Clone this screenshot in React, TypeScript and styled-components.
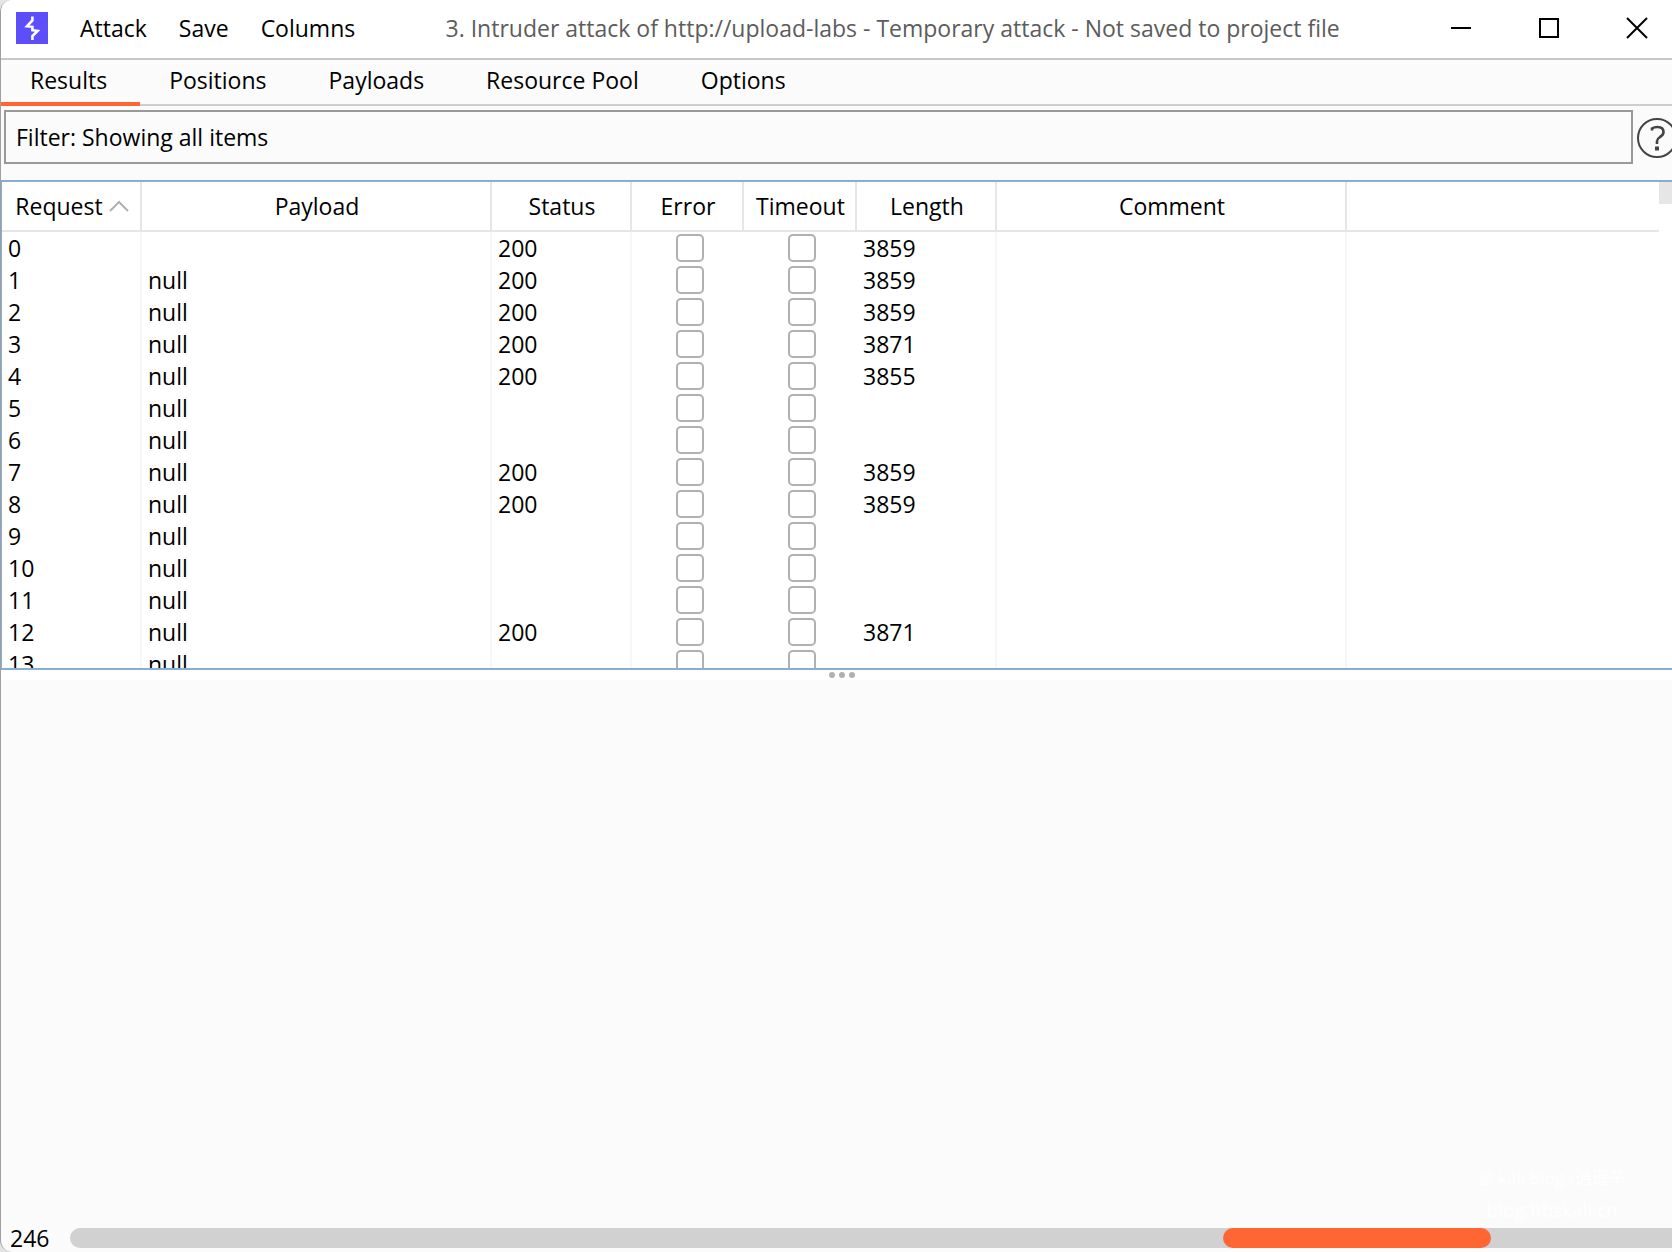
import React from "react";
import styled, { createGlobalStyle } from "styled-components";

const fontStack = `"Open Sans", "Noto Sans", "Noto Sans CJK SC", sans-serif`;

const GlobalStyle = createGlobalStyle`
  *, *::before, *::after { box-sizing: border-box; }
  html, body { margin: 0; background: #e4e4e4; overflow: hidden; }
  body, button, input { font-family: ${fontStack}; font-size: 23px; line-height: 32px; color: #000; }
  button { margin: 0; padding: 0; border: 0; background: none; white-space: nowrap; }
`;

const Window = styled.div`
  position: relative;
  display: flex;
  flex-direction: column;
  height: 100vh;
  overflow: hidden;
  background: #fbfbfb;
  border-left: 1px solid #a0a0a0;
  border-radius: 12px 0 0 12px;
`;

const TitleBar = styled.header`
  display: flex;
  align-items: center;
  height: 60px;
  padding: 0 20px 2px 15px;
  flex: none;
  background: #fff;
  border-bottom: 2px solid #c9c9c9;
`;

const Logo = styled.svg`
  width: 32px;
  height: 32px;
  flex: none;
`;

const Menu = styled.nav`
  display: flex;
  gap: 32px;
  margin-left: 32px;
`;

const MenuButton = styled.button``;

const Title = styled.h1`
  flex: 1;
  margin: 0;
  padding-right: 16px;
  font-size: 23px;
  font-weight: 400;
  line-height: 32px;
  color: #5c5c5c;
  text-align: center;
  white-space: nowrap;
`;

const WindowControls = styled.div`
  display: flex;
  gap: 58px;
`;

const ControlButton = styled.button`
  display: flex;
  align-items: center;
  justify-content: center;
  width: 30px;
  height: 32px;
`;

const TabBar = styled.div`
  display: flex;
  flex: none;
  height: 46px;
  border-bottom: 2px solid #cdcdcd;
`;

const Tab = styled.button<{ $active: boolean }>`
  height: 46px;
  padding: 0 33px 2px 29px;
  border-bottom: 4px solid ${(p) => (p.$active ? "#ff6633" : "transparent")};
`;

const FilterRow = styled.div`
  display: flex;
  flex: none;
  align-items: center;
  gap: 4px;
  padding: 4px 0 16px 3px;
`;

const FilterButton = styled.button`
  flex: 1;
  height: 54px;
  padding: 0 10px;
  border: 2px solid #999;
  text-align: left;
`;

const HelpButton = styled.button`
  display: flex;
  width: 35px;
  height: 42px;
  padding-top: 2px;
  overflow: hidden;
  flex: none;

  svg { flex: none; }
`;

const ResultsPane = styled.section`
  display: flex;
  flex: none;
  height: 490px;
  border: solid #88add3;
  border-width: 2px 0 2px 1px;
  background: #fff;
`;

const TableArea = styled.div`
  flex: 1;
  overflow: hidden;
`;

const ScrollTrack = styled.div`
  width: 13px;
  flex: none;
`;

const ScrollThumb = styled.div`
  height: 22px;
  background: #e6e6e6;
`;

const Table = styled.table`
  width: 100%;
  table-layout: fixed;
  border-collapse: separate;
  border-spacing: 0;
`;

const Col = styled.col<{ $width?: number }>`
  width: ${(p) => (p.$width ? `${p.$width}px` : "auto")};
`;

const HeadCell = styled.th<{ $last?: boolean }>`
  height: 50px;
  padding: 0 0 0 2px;
  border-bottom: 2px solid #e6e6e6;
  border-right: ${(p) => (p.$last ? "0" : "2px solid #e6e6e6")};
  font-weight: 400;
  white-space: nowrap;
`;

const SortButton = styled.button`
  display: inline-flex;
  align-items: center;
  gap: 6px;
`;

const Cell = styled.td<{ $line?: boolean }>`
  height: 32px;
  padding: 0 0 0 6px;
  border-right: ${(p) => (p.$line ? "2px solid #f7f7f7" : "0")};
`;

const CheckCell = styled(Cell)`
  padding-left: 3px;
  text-align: center;
  line-height: 0;
`;

const CheckBox = styled.input`
  appearance: none;
  width: 28px;
  height: 28px;
  margin: 0;
  border: 2px solid #b0b0b0;
  border-radius: 5px;
  background: #fff;
  vertical-align: middle;
`;

const Splitter = styled.div`
  display: flex;
  flex: none;
  justify-content: center;
  gap: 4px;
  height: 10px;
  padding: 2px 0 0 10px;
  background: #fff;
`;

const Dot = styled.span`
  width: 6px;
  height: 6px;
  border-radius: 50%;
  background: #b0b0b0;
`;

const DetailPane = styled.section`
  flex: 1;
`;

const StatusBar = styled.footer`
  display: flex;
  flex: none;
  align-items: center;
  height: 28px;
  padding-left: 9px;
`;

const Count = styled.span`
  width: 60px;
  line-height: 28px;
  flex: none;
`;

const ProgressTrack = styled.div`
  flex: 1;
  height: 20px;
  border-radius: 10px 0 0 10px;
  background: #d1d1d1;
`;

const ProgressChunk = styled.div`
  width: 16.7%;
  height: 20px;
  margin-left: 72%;
  border-radius: 10px;
  background: #ff6633;
`;

const Watermark = styled.div`
  position: absolute;
  right: 46px;
  bottom: 26px;
  color: #fff;
  font-size: 17px;
  line-height: 32px;
  text-align: center;
  pointer-events: none;
`;

const WatermarkSite = styled.div`
  font-size: 19px;
`;

const tabs = ["Results", "Positions", "Payloads", "Resource Pool", "Options"];

const columns: { name: string; width: number }[] = [
  { name: "Request", width: 140 },
  { name: "Payload", width: 350 },
  { name: "Status", width: 140 },
  { name: "Error", width: 112 },
  { name: "Timeout", width: 113 },
  { name: "Length", width: 140 },
  { name: "Comment", width: 350 },
];

const responses: Record<number, string> = {
  0: "3859",
  1: "3859",
  2: "3859",
  3: "3871",
  4: "3855",
  7: "3859",
  8: "3859",
  12: "3871",
};

const rows = Array.from({ length: 14 }, (_, id) => ({
  id,
  payload: id === 0 ? "" : "null",
  status: responses[id] ? "200" : "",
  length: responses[id] ?? "",
}));

export default function App() {
  return (
    <>
      <GlobalStyle />
      <Window>
        <TitleBar>
          <Logo viewBox="0 0 32 32" aria-hidden="true">
            <rect width="32" height="32" fill="#5c4ffb" />
            <path
              d="M16.4 4.5V8.5L11 14.2L16.4 14.8V18.2L21.6 19L16.4 24V28"
              fill="none"
              stroke="#fff"
              strokeWidth="2.6"
            />
          </Logo>
          <Menu aria-label="Main">
            <MenuButton>Attack</MenuButton>
            <MenuButton>Save</MenuButton>
            <MenuButton>Columns</MenuButton>
          </Menu>
          <Title>
            3. Intruder attack of http://upload-labs - Temporary attack - Not saved to project file
          </Title>
          <WindowControls>
            <ControlButton aria-label="Minimize">
              <svg width="20" height="20" viewBox="0 0 20 20">
                <path d="M0 10H20" stroke="#000" strokeWidth="2" />
              </svg>
            </ControlButton>
            <ControlButton aria-label="Maximize">
              <svg width="20" height="20" viewBox="0 0 20 20">
                <path d="M1 1H19V19H1Z" fill="none" stroke="#000" strokeWidth="2" />
              </svg>
            </ControlButton>
            <ControlButton aria-label="Close">
              <svg width="22" height="22" viewBox="0 0 22 22">
                <path d="M1 1L21 21M21 1L1 21" stroke="#000" strokeWidth="2" />
              </svg>
            </ControlButton>
          </WindowControls>
        </TitleBar>

        <TabBar role="tablist">
          {tabs.map((name, i) => (
            <Tab key={name} role="tab" aria-selected={i === 0} $active={i === 0}>
              {name}
            </Tab>
          ))}
        </TabBar>

        <FilterRow>
          <FilterButton>Filter: Showing all items</FilterButton>
          <HelpButton aria-label="Help">
            <svg width="40" height="40" viewBox="0 0 40 40" fill="none" stroke="#444" strokeWidth="2">
              <circle cx="20" cy="20" r="19" />
              <path
                d="M15 12.5V10.5Q17 9 20.5 9Q26.5 9 26.5 14Q26.5 17 23 19Q20 21 20 23V26"
                strokeWidth="2.6"
              />
              <path d="M20 28.5V32.5" strokeWidth="4" />
            </svg>
          </HelpButton>
        </FilterRow>

        <ResultsPane>
          <TableArea>
            <Table>
              <colgroup>
                {columns.map((c) => (
                  <Col key={c.name} $width={c.width} />
                ))}
                <Col />
              </colgroup>
              <thead>
                <tr>
                  {columns.map((c, i) => (
                    <HeadCell key={c.name} scope="col">
                      {i === 0 ? (
                        <SortButton>
                          {c.name}
                          <svg width="20" height="12" viewBox="0 0 20 12" aria-hidden="true">
                            <path d="M1 11L10 2L19 11" fill="none" stroke="#b0b0b0" strokeWidth="2" />
                          </svg>
                        </SortButton>
                      ) : (
                        c.name
                      )}
                    </HeadCell>
                  ))}
                  <HeadCell as="td" $last />
                </tr>
              </thead>
              <tbody>
                {rows.map((row) => (
                  <tr key={row.id}>
                    <Cell $line>{row.id}</Cell>
                    <Cell $line>{row.payload}</Cell>
                    <Cell $line>{row.status}</Cell>
                    <CheckCell>
                      <CheckBox type="checkbox" aria-label={`Request ${row.id} error`} />
                    </CheckCell>
                    <CheckCell>
                      <CheckBox type="checkbox" aria-label={`Request ${row.id} timeout`} />
                    </CheckCell>
                    <Cell $line>{row.length}</Cell>
                    <Cell $line />
                    <Cell />
                  </tr>
                ))}
              </tbody>
            </Table>
          </TableArea>
          <ScrollTrack>
            <ScrollThumb />
          </ScrollTrack>
        </ResultsPane>

        <Splitter role="separator">
          <Dot />
          <Dot />
          <Dot />
        </Splitter>

        <DetailPane aria-label="Request details" />

        <StatusBar>
          <Count>246</Count>
          <ProgressTrack role="progressbar" aria-label="Attack progress">
            <ProgressChunk />
          </ProgressTrack>
        </StatusBar>

        <Watermark>
          @ kali Blog /逍遥子
          <WatermarkSite>blog.bbskali.cn</WatermarkSite>
        </Watermark>
      </Window>
    </>
  );
}
